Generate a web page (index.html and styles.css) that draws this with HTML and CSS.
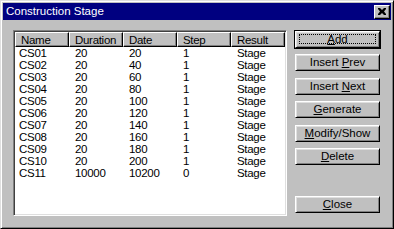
FILE: index.html
```html
<!DOCTYPE html>
<html lang="en">
<head>
  <meta charset="UTF-8">
  <title>Construction Stage</title>
  <link rel="stylesheet" href="styles.css">
</head>
<body>
  <div class="window">
    <div class="titlebar">
      <span class="title">Construction Stage</span>
      <button class="close-x" title="Close">
        <svg width="8" height="7" viewBox="0 0 8 7">
          <path d="M0 0h2l2 2 2-2h2v1L6 3.5 8 6v1H6L4 5 2 7H0V6l2-2.5L0 1z" fill="#000"/>
        </svg>
      </button>
    </div>

    <div class="dialog-body">
      <div class="listbox">
        <table class="stages">
          <thead>
            <tr><th>Name</th><th>Duration</th><th>Date</th><th>Step</th><th>Result</th></tr>
          </thead>
          <tbody>
            <tr><td>CS01</td><td>20</td><td>20</td><td>1</td><td>Stage</td></tr>
            <tr><td>CS02</td><td>20</td><td>40</td><td>1</td><td>Stage</td></tr>
            <tr><td>CS03</td><td>20</td><td>60</td><td>1</td><td>Stage</td></tr>
            <tr><td>CS04</td><td>20</td><td>80</td><td>1</td><td>Stage</td></tr>
            <tr><td>CS05</td><td>20</td><td>100</td><td>1</td><td>Stage</td></tr>
            <tr><td>CS06</td><td>20</td><td>120</td><td>1</td><td>Stage</td></tr>
            <tr><td>CS07</td><td>20</td><td>140</td><td>1</td><td>Stage</td></tr>
            <tr><td>CS08</td><td>20</td><td>160</td><td>1</td><td>Stage</td></tr>
            <tr><td>CS09</td><td>20</td><td>180</td><td>1</td><td>Stage</td></tr>
            <tr><td>CS10</td><td>20</td><td>200</td><td>1</td><td>Stage</td></tr>
            <tr><td>CS11</td><td>10000</td><td>10200</td><td>0</td><td>Stage</td></tr>
          </tbody>
        </table>
      </div>

      <div class="buttons">
        <button class="btn default"><u>A</u>dd</button>
        <button class="btn">Insert <u>P</u>rev</button>
        <button class="btn">Insert <u>N</u>ext</button>
        <button class="btn"><u>G</u>enerate</button>
        <button class="btn"><u>M</u>odify/Show</button>
        <button class="btn"><u>D</u>elete</button>
        <button class="btn close"><u>C</u>lose</button>
      </div>
    </div>
  </div>
</body>
</html>
```

FILE: styles.css
```css
* { box-sizing: border-box; }
body {
  margin: 0;
  background: #c0c0c0;
  font-family: "Liberation Sans", Arial, sans-serif;
  font-size: 11px;
  color: #000;
}
.window {
  width: 394px;
  height: 229px;
  display: flex;
  flex-direction: column;
  background: #c0c0c0;
  border: 1px solid;
  border-color: #dfdfdf #000 #000 #dfdfdf;
  box-shadow: inset 1px 1px #fff, inset -1px -1px #808080;
  padding: 2px;
}
.titlebar {
  height: 17px;
  background: #000080;
  display: flex;
  align-items: center;
  justify-content: space-between;
  padding: 0 1px 0 3px;
}
.title { color: #fff; font-size: 11.5px; line-height: 17px; }
.close-x {
  width: 16px;
  height: 14px;
  padding: 0;
  display: flex;
  align-items: center;
  justify-content: center;
  background: #c0c0c0;
  border: 1px solid;
  border-color: #fff #000 #000 #fff;
  box-shadow: inset -1px -1px #808080;
}

.dialog-body {
  flex: 1;
  display: flex;
  gap: 8px;
  padding: 10px 11px 10px 10px;
}
.listbox {
  width: 274px;
  height: 186px;
  background: #fff;
  border: 1px solid;
  border-color: #808080 #fff #fff #808080;
  box-shadow: inset 1px 1px #404040, inset -1px -1px #dfdfdf;
  padding: 1px;
  overflow: hidden;
}
.stages {
  width: 270px;
  table-layout: fixed;
  border-collapse: separate;
  border-spacing: 0;
  font-size: 11.5px;
  letter-spacing: -0.3px;
}
.stages th {
  width: 54px;
  background: #c0c0c0;
  font-weight: normal;
  text-align: left;
  line-height: 12px;
  padding: 1px 0 0 5px;
  border: 1px solid;
  border-color: #fff #000 #000 #fff;
  box-shadow: inset -1px -1px #808080;
  white-space: nowrap;
}
.stages td {
  line-height: 12px;
  padding: 0 0 0 6px;
  white-space: nowrap;
}
.stages td:first-child { padding-left: 4px; }

.buttons {
  width: 85px;
  display: flex;
  flex-direction: column;
  gap: 6.4px;
  margin: 1px 0 3px;
}
.btn {
  position: relative;
  height: 17px;
  padding: 0;
  font: inherit;
  font-size: 11.5px;
  color: #000;
  background: #c0c0c0;
  border: 1px solid;
  border-color: #fff #000 #000 #fff;
  box-shadow: inset 1px 1px #dfdfdf, inset -1px -1px #808080;
  line-height: 13px;
}
.btn u { text-underline-offset: 1px; }
.btn.default { outline: 1px solid #000; }
.btn.default::after {
  content: "";
  position: absolute;
  top: 2px;
  left: 3px;
  right: 3px;
  bottom: 3px;
  border: 1px dotted #000;
}
.btn.close { margin-top: auto; }
```
